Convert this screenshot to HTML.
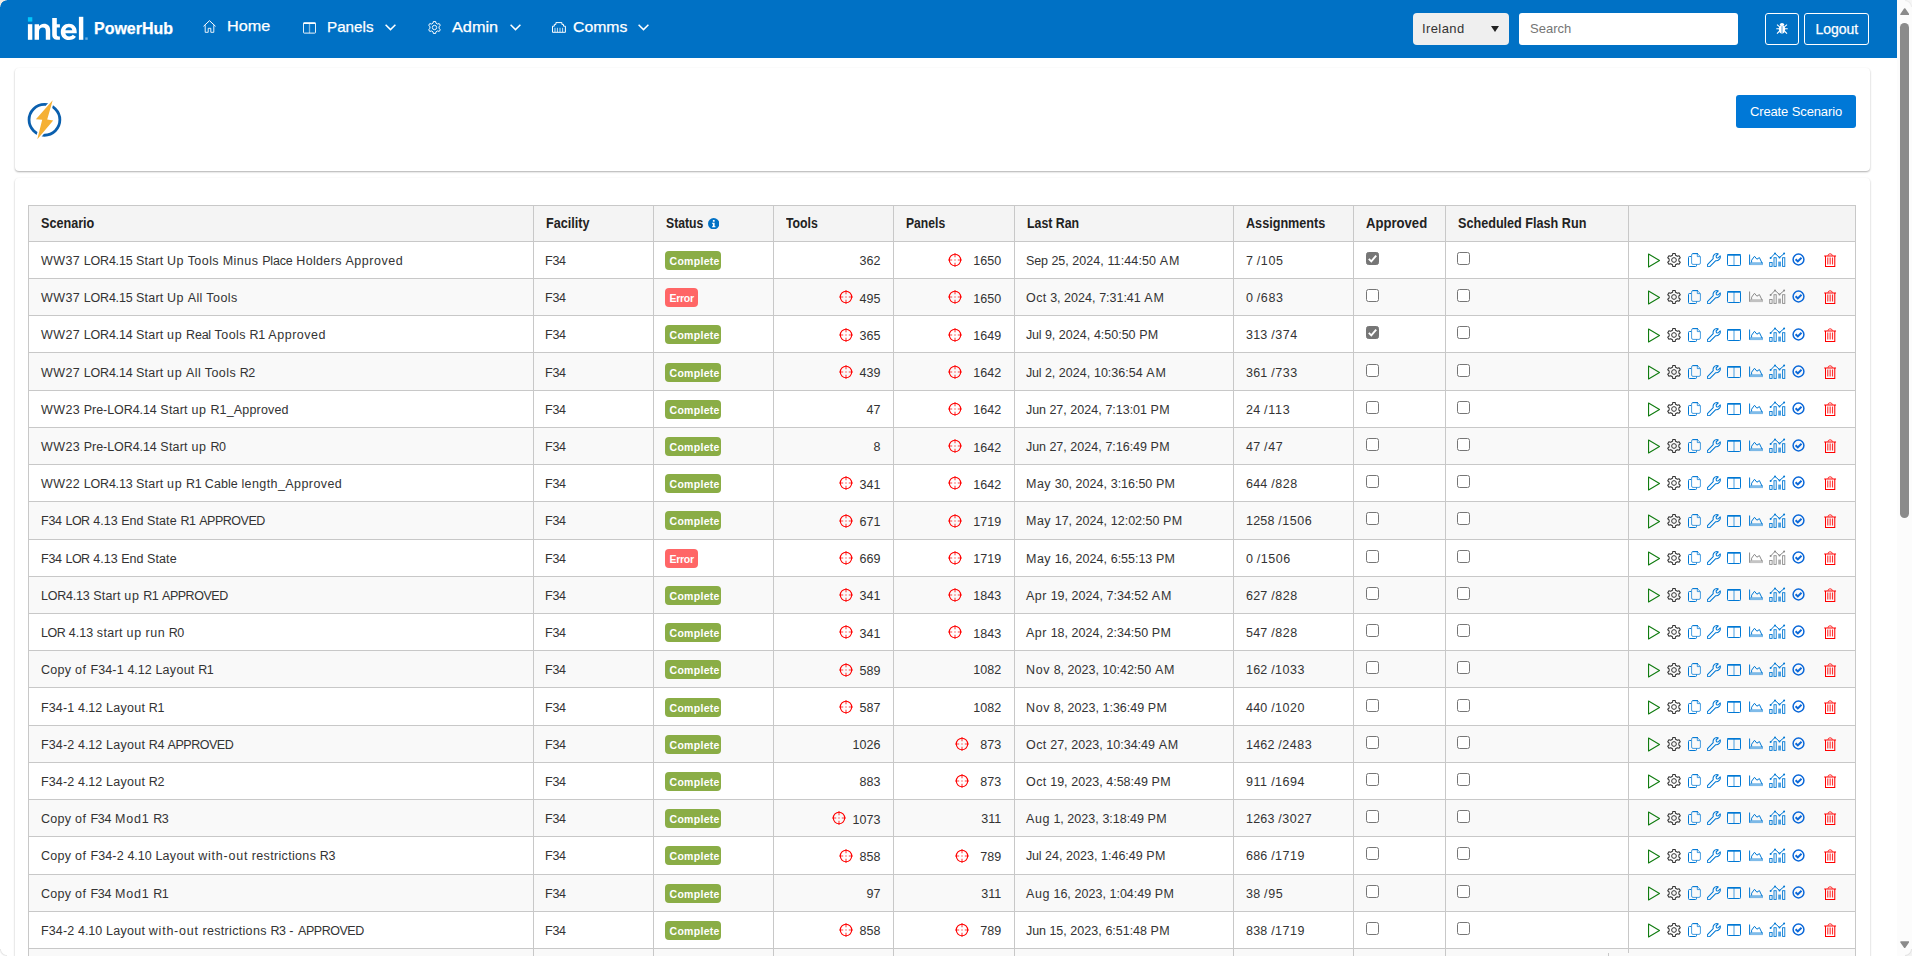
<!DOCTYPE html>
<html><head><meta charset="utf-8"><title>PowerHub</title>
<style>
*{box-sizing:border-box}
html,body{margin:0;padding:0;width:1912px;height:956px;overflow:hidden;background:#fff;font-family:"Liberation Sans",sans-serif;font-size:13px;color:#333}
#page{position:absolute;left:0;top:0;width:1897px;height:956px;overflow:hidden;background:#fff}
#nav{position:absolute;left:0;top:0;width:1897px;height:58px;background:#0071c5;color:#fff}
#nav .t{position:absolute;white-space:nowrap;color:#fff}
#nav .k{-webkit-text-stroke:0.25px #fff}
#nav svg{position:absolute;color:#fff;overflow:visible}
.card{position:absolute;left:15px;width:1855px;background:#fff;border-radius:4px;box-shadow:0 1px 2px rgba(0,0,0,.32)}
#btn{position:absolute;left:1736px;top:95px;width:120px;height:33px;background:#0078d7;border-radius:3px;color:#fff;font-size:13px;line-height:33px;text-align:center;letter-spacing:-0.12px}
table{position:absolute;left:28px;top:205px;width:1828px;border-collapse:collapse;table-layout:fixed}
th,td{border:1px solid #c8c8c8;padding:0 0 0 12px;text-align:left;vertical-align:middle;white-space:nowrap;overflow:hidden}
th{height:36px;background:#f4f4f4;font-weight:bold;color:#222;font-size:13.8px;padding-top:0}
th span{display:inline-block;transform-origin:0 50%;transform:scaleX(0.915);white-space:nowrap}
td{padding:0}
.tx{position:absolute;white-space:nowrap;font-size:12.5px;line-height:15px;color:#333;letter-spacing:0.22px}
.tx i{display:inline-block;font-style:normal;white-space:nowrap;overflow:visible}
.tx.nr{letter-spacing:0.05px;text-align:right}
.tx.dt{letter-spacing:0.12px}
tr:nth-child(even) td{background:#f9f9f9}
.badge{position:absolute;display:block;height:19px;line-height:21px;overflow:hidden;border-radius:4px;color:#fff;font-weight:bold;font-size:10.5px;letter-spacing:0;padding:0 0 0 4.5px;white-space:nowrap}
.badge.ok{background:#8aad46;width:56px;letter-spacing:0.3px}
.badge.err{background:#ff6666;width:33px;letter-spacing:-0.3px}
.cb{position:absolute;display:block;width:13px;height:13px;border:1px solid #767676;border-radius:2.5px;background:#fff}
.cb.on{background:#767676}
.cb svg{position:absolute;left:-1px;top:-1px;width:13px;height:13px}
.tg{width:14px;height:14px;color:#f00;vertical-align:top;position:relative}
.ic{position:absolute;overflow:visible}
.play{color:#107c10}
.gear{color:#333}
.b{color:#0078d4}
.chk{color:#0b68d8}
.g{color:#8a8a8a}
.r{color:#f00}
#sb{position:absolute;left:1897px;top:0;width:15px;height:956px;background:#fcfcfc}
#sb .th{position:absolute;left:3.2px;top:23px;width:9px;height:495px;border-radius:4.5px;background:#8b8b8b}
#sb .up{position:absolute;left:3px;top:7.8px;width:0;height:0;border-left:4.6px solid transparent;border-right:4.6px solid transparent;border-bottom:7.2px solid #8b8b8b}
#sb .dn{position:absolute;left:3px;top:941px;width:0;height:0;border-left:4.6px solid transparent;border-right:4.6px solid transparent;border-top:7.2px solid #8b8b8b}
</style></head><body>

<svg width="0" height="0" style="position:absolute">
<defs>
<symbol id="i-play" viewBox="0 0 13 15"><path d="M0.55 1 L11.5 7.5 L0.55 14 Z" fill="none" stroke="currentColor" stroke-width="1.1" stroke-linejoin="round"/></symbol>
<symbol id="i-gear" viewBox="0 0 14 14"><path d="M8.50 2.23 L8.18 0.46 L5.82 0.46 L5.50 2.23 L3.62 3.32 L1.92 2.71 L0.74 4.75 L2.12 5.91 L2.12 8.09 L0.74 9.25 L1.92 11.29 L3.62 10.68 L5.50 11.77 L5.82 13.54 L8.18 13.54 L8.50 11.77 L10.38 10.68 L12.08 11.29 L13.26 9.25 L11.88 8.09 L11.88 5.91 L13.26 4.75 L12.08 2.71 L10.38 3.32Z" fill="none" stroke="currentColor" stroke-width="1.05" stroke-linejoin="round"/><circle cx="7" cy="7" r="2.35" fill="none" stroke="currentColor" stroke-width="1"/></symbol>
<symbol id="i-copy" viewBox="0 0 13 14"><path d="M3.2 3.5 H1.4 Q0.5 3.5 0.5 4.4 V12.6 Q0.5 13.5 1.4 13.5 H7.6 Q8.5 13.5 8.5 12.6 V11.5" fill="none" stroke="currentColor" stroke-width="1"/><path d="M5 0.6 H9.3 L12.4 3.6 V10 Q12.4 11.4 11 11.4 H5 Q3.6 11.4 3.6 10 V2 Q3.6 0.6 5 0.6 Z" fill="none" stroke="currentColor" stroke-width="0.9" opacity="0.8"/><path d="M9.3 0.8 V3.6 H12.2" fill="none" stroke="currentColor" stroke-width="0.9" opacity="0.8"/><path d="M4.6 0.6 H10" stroke="currentColor" stroke-width="1" fill="none"/></symbol>
<symbol id="i-wrench" viewBox="0 0 14 14"><path d="M0.7 11.3 L6.2 5.7 C5.6 3.0 7.3 0.7 10.0 0.6 C10.5 0.6 10.9 0.7 11.3 0.9 L9.1 3 L9.4 4.7 L11.1 5 L13.2 2.9 C13.9 5.5 11.6 8.2 8.5 7.8 L3 13.3 C2.3 14 1.3 14 0.7 13.3 C0.1 12.7 0.1 11.9 0.7 11.3 Z" fill="none" stroke="currentColor" stroke-width="1.05" stroke-linejoin="round"/></symbol>
<symbol id="i-cols" viewBox="0 0 14 12"><rect x="0.5" y="0.5" width="13" height="11" rx="0.8" fill="none" stroke="currentColor" stroke-width="1"/><rect x="0.5" y="0" width="13" height="1.7" fill="currentColor"/><rect x="6.3" y="1" width="1.4" height="10.5" fill="currentColor" opacity="0.5"/></symbol>
<symbol id="i-area" viewBox="0 0 14 12"><path d="M0.6 0.5 V10.8" stroke="currentColor" stroke-width="1" fill="none"/><path d="M2.6 8.5 V6.2 L5.5 2.3 L7.9 5.2 L10.4 3.6 L13.2 9.4" fill="none" stroke="currentColor" stroke-width="1" stroke-linejoin="round"/><rect x="1" y="8.2" width="13" height="2.9" fill="currentColor" opacity="0.5"/></symbol>
<symbol id="i-bars" viewBox="0 0 17 15"><rect x="0.7" y="10.5" width="2.4" height="3.9" fill="none" stroke="currentColor" stroke-width="0.9"/><rect x="5" y="5.7" width="2.2" height="8.7" fill="none" stroke="currentColor" stroke-width="0.9"/><rect x="9.2" y="9.6" width="2.8" height="4.9" fill="currentColor" opacity="0.7"/><rect x="13.6" y="5.7" width="2.2" height="8.7" fill="none" stroke="currentColor" stroke-width="0.9"/><path d="M1.6 6 L6 1.4 L10.5 5.5 L15.1 1.6" fill="none" stroke="currentColor" stroke-width="1"/><circle cx="1.6" cy="6" r="1" fill="currentColor"/><circle cx="6" cy="1.4" r="1" fill="currentColor"/><circle cx="10.5" cy="5.5" r="1" fill="currentColor"/><circle cx="15.1" cy="1.6" r="1" fill="currentColor"/></symbol>
<symbol id="i-done" viewBox="0 0 13 13"><circle cx="6.5" cy="6.5" r="5.4" fill="none" stroke="currentColor" stroke-width="1.5"/><path d="M3.6 6.2 L5.8 8.4 L9.5 4.7" fill="none" stroke="currentColor" stroke-width="2"/></symbol>
<symbol id="i-trash" viewBox="0 0 13 15"><path d="M0.2 3.1 H12.8" stroke="currentColor" stroke-width="1.1" fill="none"/><path d="M4.2 2.8 C4.2 0.3 8.8 0.3 8.8 2.8" stroke="currentColor" stroke-width="1" fill="none"/><path d="M1.6 3.3 V14.3 H11.4 V3.3" stroke="currentColor" stroke-width="1.1" fill="none"/><path d="M4 4.8 V12.2 M6.5 4.8 V12.2 M9 4.8 V12.2" stroke="currentColor" stroke-width="1.2" fill="none" opacity="0.8"/></symbol>
<symbol id="i-target" viewBox="0 0 14 14"><circle cx="7" cy="7" r="5.7" fill="none" stroke="currentColor" stroke-width="1.1"/><path d="M7 0 V4.2 M7 9.8 V14 M0 7 H4.2 M9.8 7 H14 M6.3 7 H7.7" stroke="currentColor" stroke-width="1.1" opacity="0.75" fill="none"/></symbol>
<symbol id="i-home" viewBox="0 0 13 13"><path d="M0.5 6.3 L6.5 0.7 L12.5 6.3" fill="none" stroke="currentColor" stroke-width="1" stroke-linejoin="round"/><path d="M2.2 5.2 V12.3 H5.2 V8.3 H7.8 V12.3 H10.8 V5.2" fill="none" stroke="currentColor" stroke-width="1" opacity="0.9"/></symbol>
<symbol id="i-chev" viewBox="0 0 11 7"><path d="M0.6 0.7 L5.5 5.6 L10.4 0.7" fill="none" stroke="currentColor" stroke-width="1.5"/></symbol>
<symbol id="i-comms" viewBox="0 0 14 11"><path d="M0.5 10.3 V4.2 H2.3 V2.4 H3.9 V0.6 H9.9 V2.4 H11.5 V4.2 H13.4 V10.3 Z" fill="none" stroke="currentColor" stroke-width="1" stroke-linejoin="round"/><path d="M3 5.8 V10 M5.4 5.8 V10 M8 5.8 V10 M10.6 5.8 V10" stroke="currentColor" stroke-width="0.9" fill="none" opacity="0.85"/></symbol>
<symbol id="i-bug" viewBox="0 0 12 12"><ellipse cx="6" cy="7.2" rx="3.1" ry="4.2" fill="currentColor"/><path d="M3.7 3.3 C3.7 0.3 8.3 0.3 8.3 3.3 Z" fill="currentColor"/><path d="M0.3 6.8 H11.7 M1 2.6 L3.6 4.8 M11 2.6 L8.4 4.8 M1 11.6 L3.6 9 M11 11.6 L8.4 9" stroke="currentColor" stroke-width="1.1" fill="none"/><path d="M6 4.2 V11" stroke="#0071c5" stroke-width="0.7"/></symbol>
<symbol id="i-info" viewBox="0 0 11 11"><circle cx="5.5" cy="5.5" r="5.5" fill="currentColor"/><rect x="4.7" y="1.9" width="1.7" height="1.7" fill="#fff"/><path d="M3.9 4.6 H6.4 V8 H7.2 V9 H3.9 V8 H4.7 V5.6 H3.9 Z" fill="#fff"/></symbol>
</defs></svg>

<div id="page">
<div id="nav">
  <svg style="left:28px;top:17px;width:61px;height:23px" viewBox="0 0 61 23">
    <rect x="-0.1" y="0.2" width="4.4" height="4.4" fill="#00c7fd"/>
    <rect x="-0.1" y="7.2" width="4.4" height="15.6" fill="#fff"/>
    <path d="M6.6 22.8 V7.2 H11 V9.2 C12.1 7.6 13.8 6.7 16 6.7 C19.8 6.7 22.2 9 22.2 13.2 V22.8 H17.8 V14 C17.8 11.6 16.8 10.5 14.8 10.5 C12.6 10.5 11 12 11 14.6 V22.8 Z" fill="#fff"/>
    <path d="M24.2 1 H28.8 V7.2 H31.9 V10.5 H28.8 V17.2 C28.8 18.8 29.5 19.4 31 19.4 H31.9 V22.8 H30.2 C26.3 22.8 24.2 21.1 24.2 17.4 Z" fill="#fff"/>
    <path transform="translate(40.75 0) scale(1.04 1) translate(-41.15 0)" d="M41.3 6.7 C45.8 6.7 48.8 10 48.8 14.9 V16.2 H37.9 C38.2 18.2 39.5 19.4 41.6 19.4 C43 19.4 44.2 18.8 45 17.7 L48.1 19.8 C46.7 21.9 44.3 23.1 41.4 23.1 C36.7 23.1 33.5 19.8 33.5 15 C33.5 10.2 36.8 6.7 41.3 6.7 Z M41.3 10.3 C39.6 10.3 38.3 11.4 37.9 13.2 H44.6 C44.3 11.4 43.1 10.3 41.3 10.3 Z" fill="#fff" fill-rule="evenodd"/>
    <rect x="50.9" y="-0.2" width="4.4" height="23" fill="#fff"/>
    <rect x="57.3" y="20.4" width="2.4" height="2.4" fill="#6aaee0"/>
  </svg>
  <span class="t k" style="left:94.3px;top:17.9px;font-size:17.3px;font-weight:bold;letter-spacing:0;line-height:20px;transform-origin:0 50%;transform:scaleX(0.925)" >PowerHub</span>

  <svg style="left:203px;top:20px;width:13px;height:13px"><use href="#i-home"/></svg>
  <span class="t k" style="left:226.8px;top:15.9px;font-size:15px;line-height:20px;transform-origin:0 50%;transform:scaleX(1.08)" >Home</span>

  <svg style="left:303px;top:22px;width:13px;height:12px"><use href="#i-cols"/></svg>
  <span class="t k" style="left:327px;top:17.4px;font-size:15px;line-height:20px;transform-origin:0 50%;transform:scaleX(1.014)" >Panels</span>
  <svg style="left:385px;top:24px;width:11px;height:7px"><use href="#i-chev"/></svg>

  <svg style="left:428px;top:21px;width:13px;height:13px"><use href="#i-gear"/></svg>
  <span class="t k" style="left:452.2px;top:17.4px;font-size:15px;line-height:20px;transform-origin:0 50%;transform:scaleX(1.086)" >Admin</span>
  <svg style="left:510px;top:24px;width:11px;height:7px"><use href="#i-chev"/></svg>

  <svg style="left:552px;top:22px;width:14px;height:11px"><use href="#i-comms"/></svg>
  <span class="t k" style="left:573px;top:17.4px;font-size:15px;line-height:20px;transform-origin:0 50%;transform:scaleX(1.053)" >Comms</span>
  <svg style="left:638px;top:24px;width:11px;height:7px"><use href="#i-chev"/></svg>

  <div style="position:absolute;left:1413px;top:13px;width:96px;height:32px;background:#efefef;border-radius:4px"></div>
  <span class="t" style="left:1422px;top:19px;font-size:13px;line-height:20px;color:#333;letter-spacing:0.4px">Ireland</span>
  <div style="position:absolute;left:1491px;top:26px;width:0;height:0;border-left:4.2px solid transparent;border-right:4.2px solid transparent;border-top:6px solid #222"></div>
  <div style="position:absolute;left:1519px;top:13px;width:219px;height:32px;background:#fff;border-radius:3px"></div>
  <span class="t" style="left:1530px;top:19px;font-size:13px;line-height:20px;color:#757575">Search</span>
  <div style="position:absolute;left:1765px;top:13px;width:34px;height:32px;border:1px solid #fff;border-radius:3px"></div>
  <svg style="left:1776px;top:22px;width:12px;height:12px"><use href="#i-bug"/></svg>
  <div style="position:absolute;left:1804px;top:13px;width:65px;height:32px;border:1px solid #fff;border-radius:3px"></div>
  <span class="t k" style="left:1815.5px;top:19px;font-size:14px;line-height:20px;letter-spacing:-0.05px" >Logout</span>
</div>

<div class="card" style="top:68px;height:103px"></div>
<svg style="position:absolute;left:20px;top:95px;width:50px;height:50px;overflow:visible" viewBox="20 95 50 50">
  <circle cx="44.45" cy="119.85" r="15.4" fill="none" stroke="#0a5fae" stroke-width="2.8"/>
  <path d="M52.7 100.2 L35.9 119.3 L42.2 119.8 L37.3 139.2 L53.2 120.4 L47.2 119.6 Z" fill="#fff" stroke="#fff" stroke-width="3.2" stroke-linejoin="miter"/>
  <path d="M52.7 100.2 L35.9 119.3 L42.2 119.8 L37.3 139.2 L53.2 120.4 L47.2 119.6 Z" fill="#f5b034"/>
</svg>
<div id="btn">Create Scenario</div>

<div class="card" style="top:178px;height:900px"></div>
<table>
<colgroup><col style="width:505px"><col style="width:120px"><col style="width:120px"><col style="width:120px"><col style="width:121px"><col style="width:219px"><col style="width:120px"><col style="width:92px"><col style="width:183px"><col style="width:227px"></colgroup>
<thead><tr><th><span>Scenario</span></th><th><span>Facility</span></th><th style="position:relative"><span style="transform:scaleX(0.885)">Status</span><svg style="position:absolute;left:54px;top:12px;width:11.4px;height:11.4px;color:#0071c5"><use href="#i-info"/></svg></th><th><span style="transform:scaleX(0.89)">Tools</span></th><th><span style="transform:scaleX(0.88)">Panels</span></th><th><span style="transform:scaleX(0.895)">Last Ran</span></th><th><span>Assignments</span></th><th><span style="transform:scaleX(0.95)">Approved</span></th><th><span>Scheduled Flash Run</span></th><th></th></tr></thead>
<tbody>
<tr style="height:37px"><td></td><td></td><td></td><td></td><td></td><td></td><td></td><td></td><td></td><td></td></tr>
<tr style="height:37px"><td></td><td></td><td></td><td></td><td></td><td></td><td></td><td></td><td></td><td></td></tr>
<tr style="height:37px"><td></td><td></td><td></td><td></td><td></td><td></td><td></td><td></td><td></td><td></td></tr>
<tr style="height:38px"><td></td><td></td><td></td><td></td><td></td><td></td><td></td><td></td><td></td><td></td></tr>
<tr style="height:37px"><td></td><td></td><td></td><td></td><td></td><td></td><td></td><td></td><td></td><td></td></tr>
<tr style="height:37px"><td></td><td></td><td></td><td></td><td></td><td></td><td></td><td></td><td></td><td></td></tr>
<tr style="height:37px"><td></td><td></td><td></td><td></td><td></td><td></td><td></td><td></td><td></td><td></td></tr>
<tr style="height:38px"><td></td><td></td><td></td><td></td><td></td><td></td><td></td><td></td><td></td><td></td></tr>
<tr style="height:37px"><td></td><td></td><td></td><td></td><td></td><td></td><td></td><td></td><td></td><td></td></tr>
<tr style="height:37px"><td></td><td></td><td></td><td></td><td></td><td></td><td></td><td></td><td></td><td></td></tr>
<tr style="height:37px"><td></td><td></td><td></td><td></td><td></td><td></td><td></td><td></td><td></td><td></td></tr>
<tr style="height:37px"><td></td><td></td><td></td><td></td><td></td><td></td><td></td><td></td><td></td><td></td></tr>
<tr style="height:38px"><td></td><td></td><td></td><td></td><td></td><td></td><td></td><td></td><td></td><td></td></tr>
<tr style="height:37px"><td></td><td></td><td></td><td></td><td></td><td></td><td></td><td></td><td></td><td></td></tr>
<tr style="height:37px"><td></td><td></td><td></td><td></td><td></td><td></td><td></td><td></td><td></td><td></td></tr>
<tr style="height:37px"><td></td><td></td><td></td><td></td><td></td><td></td><td></td><td></td><td></td><td></td></tr>
<tr style="height:38px"><td></td><td></td><td></td><td></td><td></td><td></td><td></td><td></td><td></td><td></td></tr>
<tr style="height:37px"><td></td><td></td><td></td><td></td><td></td><td></td><td></td><td></td><td></td><td></td></tr>
<tr style="height:37px"><td></td><td></td><td></td><td></td><td></td><td></td><td></td><td></td><td></td><td></td></tr>
<tr style="height:37px"><td></td><td></td><td></td><td></td><td></td><td></td><td></td><td></td><td></td><td></td></tr>
</tbody></table>
<span class="tx" style="left:41px;top:254px"><i style="width:42.80px;letter-spacing:0.414px">WW37</i><i style="width:52.22px;letter-spacing:-0.207px">LOR4.15</i><i style="width:31.09px;letter-spacing:0.210px">Start</i><i style="width:20.58px;letter-spacing:0.480px">Up</i><i style="width:35.02px;letter-spacing:0.441px">Tools</i><i style="width:39.47px;letter-spacing:0.497px">Minus</i><i style="width:34.15px;letter-spacing:-0.152px">Place</i><i style="width:49.10px;letter-spacing:0.341px">Holders</i><i style="width:57.72px;letter-spacing:0.526px">Approved</i></span>
<span class="tx" style="left:545px;top:254px"><i style="width:20.81px;letter-spacing:-0.243px">F34</i></span>
<span class="badge ok" style="left:665px;top:251px">Complete</span>
<span class="tx nr" style="right:1016.4px;top:254px">362</span>
<span class="tx nr" style="right:895.8px;top:254px"><svg class="tg" style="margin-right:11px;top:-1px"><use href="#i-target"/></svg>1650</span>
<span class="tx" style="left:1026px;top:254px"><i style="width:25.46px;letter-spacing:-0.142px">Sep</i><i style="width:20.84px;letter-spacing:-0.057px">25,</i><i style="width:35.17px;letter-spacing:0.050px">2024,</i><i style="width:52.37px;letter-spacing:0.125px">11:44:50</i><i style="width:20.49px;letter-spacing:0.872px">AM</i></span>
<span class="tx" style="left:1246px;top:254px"><i style="width:10.80px;letter-spacing:0.210px">7</i><i style="width:26.66px;letter-spacing:0.584px">/105</i></span>
<span class="cb on" style="left:1366px;top:252px"><svg viewBox="0 0 13 13"><path d="M2.8 6.8 L5.3 9.3 L10.2 3.6" fill="none" stroke="#fff" stroke-width="1.9"/></svg></span>
<span class="cb" style="left:1457px;top:252px"></span>
<svg class="ic play" style="left:1648px;top:252.5px;width:13px;height:15px"><use href="#i-play"/></svg><svg class="ic gear" style="left:1667px;top:253px;width:14px;height:14px"><use href="#i-gear"/></svg><svg class="ic b" style="left:1688px;top:253px;width:13px;height:14px"><use href="#i-copy"/></svg><svg class="ic b" style="left:1707px;top:253px;width:14px;height:14px"><use href="#i-wrench"/></svg><svg class="ic b" style="left:1727px;top:254px;width:14px;height:12px"><use href="#i-cols"/></svg><svg class="ic b" style="left:1749px;top:253.8px;width:14px;height:12px"><use href="#i-area"/></svg><svg class="ic b" style="left:1768.5px;top:252px;width:17px;height:15px"><use href="#i-bars"/></svg><svg class="ic chk" style="left:1791.6px;top:253.2px;width:13px;height:13px"><use href="#i-done"/></svg><svg class="ic r" style="left:1824px;top:252.6px;width:12.3px;height:14.2px"><use href="#i-trash"/></svg>
<span class="tx" style="left:41px;top:291px"><i style="width:42.80px;letter-spacing:0.414px">WW37</i><i style="width:52.22px;letter-spacing:-0.207px">LOR4.15</i><i style="width:31.09px;letter-spacing:0.210px">Start</i><i style="width:20.58px;letter-spacing:0.480px">Up</i><i style="width:18.64px;letter-spacing:0.371px">All</i><i style="width:31.39px;letter-spacing:0.441px">Tools</i></span>
<span class="tx" style="left:545px;top:291px"><i style="width:20.81px;letter-spacing:-0.243px">F34</i></span>
<span class="badge err" style="left:665px;top:288px">Error</span>
<span class="tx nr" style="right:1016.4px;top:292px"><svg class="tg" style="margin-right:7px;top:-2px"><use href="#i-target"/></svg>495</span>
<span class="tx nr" style="right:895.8px;top:292px"><svg class="tg" style="margin-right:11px;top:-2px"><use href="#i-target"/></svg>1650</span>
<span class="tx" style="left:1026px;top:291px"><i style="width:24.30px;letter-spacing:0.405px">Oct</i><i style="width:13.68px;letter-spacing:-0.191px">3,</i><i style="width:35.17px;letter-spacing:0.050px">2024,</i><i style="width:45.21px;letter-spacing:-0.019px">7:31:41</i><i style="width:20.49px;letter-spacing:0.872px">AM</i></span>
<span class="tx" style="left:1246px;top:291px"><i style="width:10.80px;letter-spacing:0.210px">0</i><i style="width:26.66px;letter-spacing:0.584px">/683</i></span>
<span class="cb" style="left:1366px;top:289px"></span>
<span class="cb" style="left:1457px;top:289px"></span>
<svg class="ic play" style="left:1648px;top:289.5px;width:13px;height:15px"><use href="#i-play"/></svg><svg class="ic gear" style="left:1667px;top:290px;width:14px;height:14px"><use href="#i-gear"/></svg><svg class="ic b" style="left:1688px;top:290px;width:13px;height:14px"><use href="#i-copy"/></svg><svg class="ic b" style="left:1707px;top:290px;width:14px;height:14px"><use href="#i-wrench"/></svg><svg class="ic b" style="left:1727px;top:291px;width:14px;height:12px"><use href="#i-cols"/></svg><svg class="ic g" style="left:1749px;top:290.8px;width:14px;height:12px"><use href="#i-area"/></svg><svg class="ic g" style="left:1768.5px;top:289px;width:17px;height:15px"><use href="#i-bars"/></svg><svg class="ic chk" style="left:1791.6px;top:290.2px;width:13px;height:13px"><use href="#i-done"/></svg><svg class="ic r" style="left:1824px;top:289.6px;width:12.3px;height:14.2px"><use href="#i-trash"/></svg>
<span class="tx" style="left:41px;top:328px"><i style="width:42.80px;letter-spacing:0.414px">WW27</i><i style="width:52.22px;letter-spacing:-0.207px">LOR4.14</i><i style="width:31.09px;letter-spacing:0.210px">Start</i><i style="width:18.98px;letter-spacing:0.716px">up</i><i style="width:28.52px;letter-spacing:-0.207px">Real</i><i style="width:35.02px;letter-spacing:0.441px">Tools</i><i style="width:18.75px;letter-spacing:-0.435px">R1</i><i style="width:57.72px;letter-spacing:0.526px">Approved</i></span>
<span class="tx" style="left:545px;top:328px"><i style="width:20.81px;letter-spacing:-0.243px">F34</i></span>
<span class="badge ok" style="left:665px;top:325px">Complete</span>
<span class="tx nr" style="right:1016.4px;top:329px"><svg class="tg" style="margin-right:7px;top:-1px"><use href="#i-target"/></svg>365</span>
<span class="tx nr" style="right:895.8px;top:329px"><svg class="tg" style="margin-right:11px;top:-1px"><use href="#i-target"/></svg>1649</span>
<span class="tx" style="left:1026px;top:328px"><i style="width:19.12px;letter-spacing:-0.167px">Jul</i><i style="width:13.68px;letter-spacing:-0.191px">9,</i><i style="width:35.17px;letter-spacing:0.050px">2024,</i><i style="width:45.21px;letter-spacing:-0.019px">4:50:50</i><i style="width:19.36px;letter-spacing:0.307px">PM</i></span>
<span class="tx" style="left:1246px;top:328px"><i style="width:25.13px;letter-spacing:0.210px">313</i><i style="width:26.66px;letter-spacing:0.584px">/374</i></span>
<span class="cb on" style="left:1366px;top:326px"><svg viewBox="0 0 13 13"><path d="M2.8 6.8 L5.3 9.3 L10.2 3.6" fill="none" stroke="#fff" stroke-width="1.9"/></svg></span>
<span class="cb" style="left:1457px;top:326px"></span>
<svg class="ic play" style="left:1648px;top:327.5px;width:13px;height:15px"><use href="#i-play"/></svg><svg class="ic gear" style="left:1667px;top:328px;width:14px;height:14px"><use href="#i-gear"/></svg><svg class="ic b" style="left:1688px;top:328px;width:13px;height:14px"><use href="#i-copy"/></svg><svg class="ic b" style="left:1707px;top:328px;width:14px;height:14px"><use href="#i-wrench"/></svg><svg class="ic b" style="left:1727px;top:329px;width:14px;height:12px"><use href="#i-cols"/></svg><svg class="ic b" style="left:1749px;top:328.8px;width:14px;height:12px"><use href="#i-area"/></svg><svg class="ic b" style="left:1768.5px;top:327px;width:17px;height:15px"><use href="#i-bars"/></svg><svg class="ic chk" style="left:1791.6px;top:328.2px;width:13px;height:13px"><use href="#i-done"/></svg><svg class="ic r" style="left:1824px;top:327.6px;width:12.3px;height:14.2px"><use href="#i-trash"/></svg>
<span class="tx" style="left:41px;top:366px"><i style="width:42.80px;letter-spacing:0.414px">WW27</i><i style="width:52.22px;letter-spacing:-0.207px">LOR4.14</i><i style="width:31.09px;letter-spacing:0.210px">Start</i><i style="width:18.98px;letter-spacing:0.716px">up</i><i style="width:18.64px;letter-spacing:0.371px">All</i><i style="width:35.02px;letter-spacing:0.441px">Tools</i><i style="width:15.11px;letter-spacing:-0.435px">R2</i></span>
<span class="tx" style="left:545px;top:366px"><i style="width:20.81px;letter-spacing:-0.243px">F34</i></span>
<span class="badge ok" style="left:665px;top:363px">Complete</span>
<span class="tx nr" style="right:1016.4px;top:366px"><svg class="tg" style="margin-right:7px;top:-1px"><use href="#i-target"/></svg>439</span>
<span class="tx nr" style="right:895.8px;top:366px"><svg class="tg" style="margin-right:11px;top:-1px"><use href="#i-target"/></svg>1642</span>
<span class="tx" style="left:1026px;top:366px"><i style="width:19.12px;letter-spacing:-0.167px">Jul</i><i style="width:13.68px;letter-spacing:-0.191px">2,</i><i style="width:35.17px;letter-spacing:0.050px">2024,</i><i style="width:52.37px;letter-spacing:0.009px">10:36:54</i><i style="width:20.49px;letter-spacing:0.872px">AM</i></span>
<span class="tx" style="left:1246px;top:366px"><i style="width:25.13px;letter-spacing:0.210px">361</i><i style="width:26.66px;letter-spacing:0.584px">/733</i></span>
<span class="cb" style="left:1366px;top:364px"></span>
<span class="cb" style="left:1457px;top:364px"></span>
<svg class="ic play" style="left:1648px;top:364.5px;width:13px;height:15px"><use href="#i-play"/></svg><svg class="ic gear" style="left:1667px;top:365px;width:14px;height:14px"><use href="#i-gear"/></svg><svg class="ic b" style="left:1688px;top:365px;width:13px;height:14px"><use href="#i-copy"/></svg><svg class="ic b" style="left:1707px;top:365px;width:14px;height:14px"><use href="#i-wrench"/></svg><svg class="ic b" style="left:1727px;top:366px;width:14px;height:12px"><use href="#i-cols"/></svg><svg class="ic b" style="left:1749px;top:365.8px;width:14px;height:12px"><use href="#i-area"/></svg><svg class="ic b" style="left:1768.5px;top:364px;width:17px;height:15px"><use href="#i-bars"/></svg><svg class="ic chk" style="left:1791.6px;top:365.2px;width:13px;height:13px"><use href="#i-done"/></svg><svg class="ic r" style="left:1824px;top:364.6px;width:12.3px;height:14.2px"><use href="#i-trash"/></svg>
<span class="tx" style="left:41px;top:403px"><i style="width:42.80px;letter-spacing:0.414px">WW23</i><i style="width:76.55px;letter-spacing:-0.067px">Pre-LOR4.14</i><i style="width:31.09px;letter-spacing:0.210px">Start</i><i style="width:18.98px;letter-spacing:0.716px">up</i><i style="width:78.34px;letter-spacing:0.173px">R1_Approved</i></span>
<span class="tx" style="left:545px;top:403px"><i style="width:20.81px;letter-spacing:-0.243px">F34</i></span>
<span class="badge ok" style="left:665px;top:400px">Complete</span>
<span class="tx nr" style="right:1016.4px;top:403px">47</span>
<span class="tx nr" style="right:895.8px;top:403px"><svg class="tg" style="margin-right:11px;top:-1px"><use href="#i-target"/></svg>1642</span>
<span class="tx" style="left:1026px;top:403px"><i style="width:23.43px;letter-spacing:-0.123px">Jun</i><i style="width:20.84px;letter-spacing:-0.057px">27,</i><i style="width:35.17px;letter-spacing:0.050px">2024,</i><i style="width:45.21px;letter-spacing:-0.019px">7:13:01</i><i style="width:19.36px;letter-spacing:0.307px">PM</i></span>
<span class="tx" style="left:1246px;top:403px"><i style="width:17.96px;letter-spacing:0.210px">24</i><i style="width:26.66px;letter-spacing:0.815px">/113</i></span>
<span class="cb" style="left:1366px;top:401px"></span>
<span class="cb" style="left:1457px;top:401px"></span>
<svg class="ic play" style="left:1648px;top:401.5px;width:13px;height:15px"><use href="#i-play"/></svg><svg class="ic gear" style="left:1667px;top:402px;width:14px;height:14px"><use href="#i-gear"/></svg><svg class="ic b" style="left:1688px;top:402px;width:13px;height:14px"><use href="#i-copy"/></svg><svg class="ic b" style="left:1707px;top:402px;width:14px;height:14px"><use href="#i-wrench"/></svg><svg class="ic b" style="left:1727px;top:403px;width:14px;height:12px"><use href="#i-cols"/></svg><svg class="ic b" style="left:1749px;top:402.8px;width:14px;height:12px"><use href="#i-area"/></svg><svg class="ic b" style="left:1768.5px;top:401px;width:17px;height:15px"><use href="#i-bars"/></svg><svg class="ic chk" style="left:1791.6px;top:402.2px;width:13px;height:13px"><use href="#i-done"/></svg><svg class="ic r" style="left:1824px;top:401.6px;width:12.3px;height:14.2px"><use href="#i-trash"/></svg>
<span class="tx" style="left:41px;top:440px"><i style="width:42.80px;letter-spacing:0.414px">WW23</i><i style="width:76.55px;letter-spacing:-0.067px">Pre-LOR4.14</i><i style="width:31.09px;letter-spacing:0.210px">Start</i><i style="width:18.98px;letter-spacing:0.716px">up</i><i style="width:15.11px;letter-spacing:-0.435px">R0</i></span>
<span class="tx" style="left:545px;top:440px"><i style="width:20.81px;letter-spacing:-0.243px">F34</i></span>
<span class="badge ok" style="left:665px;top:437px">Complete</span>
<span class="tx nr" style="right:1016.4px;top:440px">8</span>
<span class="tx nr" style="right:895.8px;top:441px"><svg class="tg" style="margin-right:11px;top:-2px"><use href="#i-target"/></svg>1642</span>
<span class="tx" style="left:1026px;top:440px"><i style="width:23.43px;letter-spacing:-0.123px">Jun</i><i style="width:20.84px;letter-spacing:-0.057px">27,</i><i style="width:35.17px;letter-spacing:0.050px">2024,</i><i style="width:45.21px;letter-spacing:-0.019px">7:16:49</i><i style="width:19.36px;letter-spacing:0.307px">PM</i></span>
<span class="tx" style="left:1246px;top:440px"><i style="width:17.96px;letter-spacing:0.210px">47</i><i style="width:19.50px;letter-spacing:0.708px">/47</i></span>
<span class="cb" style="left:1366px;top:438px"></span>
<span class="cb" style="left:1457px;top:438px"></span>
<svg class="ic play" style="left:1648px;top:438.5px;width:13px;height:15px"><use href="#i-play"/></svg><svg class="ic gear" style="left:1667px;top:439px;width:14px;height:14px"><use href="#i-gear"/></svg><svg class="ic b" style="left:1688px;top:439px;width:13px;height:14px"><use href="#i-copy"/></svg><svg class="ic b" style="left:1707px;top:439px;width:14px;height:14px"><use href="#i-wrench"/></svg><svg class="ic b" style="left:1727px;top:440px;width:14px;height:12px"><use href="#i-cols"/></svg><svg class="ic b" style="left:1749px;top:439.8px;width:14px;height:12px"><use href="#i-area"/></svg><svg class="ic b" style="left:1768.5px;top:438px;width:17px;height:15px"><use href="#i-bars"/></svg><svg class="ic chk" style="left:1791.6px;top:439.2px;width:13px;height:13px"><use href="#i-done"/></svg><svg class="ic r" style="left:1824px;top:438.6px;width:12.3px;height:14.2px"><use href="#i-trash"/></svg>
<span class="tx" style="left:41px;top:477px"><i style="width:42.80px;letter-spacing:0.414px">WW22</i><i style="width:52.22px;letter-spacing:-0.207px">LOR4.13</i><i style="width:31.09px;letter-spacing:0.210px">Start</i><i style="width:18.98px;letter-spacing:0.716px">up</i><i style="width:18.75px;letter-spacing:-0.435px">R1</i><i style="width:36.61px;letter-spacing:0.062px">Cable</i><i style="width:100.77px;letter-spacing:0.417px">length_Approved</i></span>
<span class="tx" style="left:545px;top:477px"><i style="width:20.81px;letter-spacing:-0.243px">F34</i></span>
<span class="badge ok" style="left:665px;top:474px">Complete</span>
<span class="tx nr" style="right:1016.4px;top:478px"><svg class="tg" style="margin-right:7px;top:-2px"><use href="#i-target"/></svg>341</span>
<span class="tx nr" style="right:895.8px;top:478px"><svg class="tg" style="margin-right:11px;top:-2px"><use href="#i-target"/></svg>1642</span>
<span class="tx" style="left:1026px;top:477px"><i style="width:28.75px;letter-spacing:0.497px">May</i><i style="width:20.84px;letter-spacing:-0.057px">30,</i><i style="width:35.17px;letter-spacing:0.050px">2024,</i><i style="width:45.21px;letter-spacing:-0.019px">3:16:50</i><i style="width:19.36px;letter-spacing:0.307px">PM</i></span>
<span class="tx" style="left:1246px;top:477px"><i style="width:25.13px;letter-spacing:0.210px">644</i><i style="width:26.66px;letter-spacing:0.584px">/828</i></span>
<span class="cb" style="left:1366px;top:475px"></span>
<span class="cb" style="left:1457px;top:475px"></span>
<svg class="ic play" style="left:1648px;top:475.5px;width:13px;height:15px"><use href="#i-play"/></svg><svg class="ic gear" style="left:1667px;top:476px;width:14px;height:14px"><use href="#i-gear"/></svg><svg class="ic b" style="left:1688px;top:476px;width:13px;height:14px"><use href="#i-copy"/></svg><svg class="ic b" style="left:1707px;top:476px;width:14px;height:14px"><use href="#i-wrench"/></svg><svg class="ic b" style="left:1727px;top:477px;width:14px;height:12px"><use href="#i-cols"/></svg><svg class="ic b" style="left:1749px;top:476.8px;width:14px;height:12px"><use href="#i-area"/></svg><svg class="ic b" style="left:1768.5px;top:475px;width:17px;height:15px"><use href="#i-bars"/></svg><svg class="ic chk" style="left:1791.6px;top:476.2px;width:13px;height:13px"><use href="#i-done"/></svg><svg class="ic r" style="left:1824px;top:475.6px;width:12.3px;height:14.2px"><use href="#i-trash"/></svg>
<span class="tx" style="left:41px;top:514px"><i style="width:24.45px;letter-spacing:-0.243px">F34</i><i style="width:27.86px;letter-spacing:-0.495px">LOR</i><i style="width:28.01px;letter-spacing:0.009px">4.13</i><i style="width:25.70px;letter-spacing:-0.062px">End</i><i style="width:33.42px;letter-spacing:0.119px">State</i><i style="width:18.75px;letter-spacing:-0.435px">R1</i><i style="width:65.71px;letter-spacing:-0.469px">APPROVED</i></span>
<span class="tx" style="left:545px;top:514px"><i style="width:20.81px;letter-spacing:-0.243px">F34</i></span>
<span class="badge ok" style="left:665px;top:511px">Complete</span>
<span class="tx nr" style="right:1016.4px;top:515px"><svg class="tg" style="margin-right:7px;top:-1px"><use href="#i-target"/></svg>671</span>
<span class="tx nr" style="right:895.8px;top:515px"><svg class="tg" style="margin-right:11px;top:-1px"><use href="#i-target"/></svg>1719</span>
<span class="tx" style="left:1026px;top:514px"><i style="width:28.75px;letter-spacing:0.497px">May</i><i style="width:20.84px;letter-spacing:-0.057px">17,</i><i style="width:35.17px;letter-spacing:0.050px">2024,</i><i style="width:52.37px;letter-spacing:0.009px">12:02:50</i><i style="width:19.36px;letter-spacing:0.307px">PM</i></span>
<span class="tx" style="left:1246px;top:514px"><i style="width:32.29px;letter-spacing:0.210px">1258</i><i style="width:33.82px;letter-spacing:0.509px">/1506</i></span>
<span class="cb" style="left:1366px;top:512px"></span>
<span class="cb" style="left:1457px;top:512px"></span>
<svg class="ic play" style="left:1648px;top:513.5px;width:13px;height:15px"><use href="#i-play"/></svg><svg class="ic gear" style="left:1667px;top:514px;width:14px;height:14px"><use href="#i-gear"/></svg><svg class="ic b" style="left:1688px;top:514px;width:13px;height:14px"><use href="#i-copy"/></svg><svg class="ic b" style="left:1707px;top:514px;width:14px;height:14px"><use href="#i-wrench"/></svg><svg class="ic b" style="left:1727px;top:515px;width:14px;height:12px"><use href="#i-cols"/></svg><svg class="ic b" style="left:1749px;top:514.8px;width:14px;height:12px"><use href="#i-area"/></svg><svg class="ic b" style="left:1768.5px;top:513px;width:17px;height:15px"><use href="#i-bars"/></svg><svg class="ic chk" style="left:1791.6px;top:514.2px;width:13px;height:13px"><use href="#i-done"/></svg><svg class="ic r" style="left:1824px;top:513.6px;width:12.3px;height:14.2px"><use href="#i-trash"/></svg>
<span class="tx" style="left:41px;top:552px"><i style="width:24.45px;letter-spacing:-0.243px">F34</i><i style="width:27.86px;letter-spacing:-0.495px">LOR</i><i style="width:28.01px;letter-spacing:0.009px">4.13</i><i style="width:25.70px;letter-spacing:-0.062px">End</i><i style="width:29.78px;letter-spacing:0.119px">State</i></span>
<span class="tx" style="left:545px;top:552px"><i style="width:20.81px;letter-spacing:-0.243px">F34</i></span>
<span class="badge err" style="left:665px;top:549px">Error</span>
<span class="tx nr" style="right:1016.4px;top:552px"><svg class="tg" style="margin-right:7px;top:-1px"><use href="#i-target"/></svg>669</span>
<span class="tx nr" style="right:895.8px;top:552px"><svg class="tg" style="margin-right:11px;top:-1px"><use href="#i-target"/></svg>1719</span>
<span class="tx" style="left:1026px;top:552px"><i style="width:28.75px;letter-spacing:0.497px">May</i><i style="width:20.84px;letter-spacing:-0.057px">16,</i><i style="width:35.17px;letter-spacing:0.050px">2024,</i><i style="width:45.21px;letter-spacing:-0.019px">6:55:13</i><i style="width:19.36px;letter-spacing:0.307px">PM</i></span>
<span class="tx" style="left:1246px;top:552px"><i style="width:10.80px;letter-spacing:0.210px">0</i><i style="width:33.82px;letter-spacing:0.509px">/1506</i></span>
<span class="cb" style="left:1366px;top:550px"></span>
<span class="cb" style="left:1457px;top:550px"></span>
<svg class="ic play" style="left:1648px;top:550.5px;width:13px;height:15px"><use href="#i-play"/></svg><svg class="ic gear" style="left:1667px;top:551px;width:14px;height:14px"><use href="#i-gear"/></svg><svg class="ic b" style="left:1688px;top:551px;width:13px;height:14px"><use href="#i-copy"/></svg><svg class="ic b" style="left:1707px;top:551px;width:14px;height:14px"><use href="#i-wrench"/></svg><svg class="ic b" style="left:1727px;top:552px;width:14px;height:12px"><use href="#i-cols"/></svg><svg class="ic g" style="left:1749px;top:551.8px;width:14px;height:12px"><use href="#i-area"/></svg><svg class="ic g" style="left:1768.5px;top:550px;width:17px;height:15px"><use href="#i-bars"/></svg><svg class="ic chk" style="left:1791.6px;top:551.2px;width:13px;height:13px"><use href="#i-done"/></svg><svg class="ic r" style="left:1824px;top:550.6px;width:12.3px;height:14.2px"><use href="#i-trash"/></svg>
<span class="tx" style="left:41px;top:589px"><i style="width:52.22px;letter-spacing:-0.207px">LOR4.13</i><i style="width:31.09px;letter-spacing:0.210px">Start</i><i style="width:18.98px;letter-spacing:0.716px">up</i><i style="width:18.75px;letter-spacing:-0.435px">R1</i><i style="width:65.71px;letter-spacing:-0.469px">APPROVED</i></span>
<span class="tx" style="left:545px;top:589px"><i style="width:20.81px;letter-spacing:-0.243px">F34</i></span>
<span class="badge ok" style="left:665px;top:586px">Complete</span>
<span class="tx nr" style="right:1016.4px;top:589px"><svg class="tg" style="margin-right:7px;top:-1px"><use href="#i-target"/></svg>341</span>
<span class="tx nr" style="right:895.8px;top:589px"><svg class="tg" style="margin-right:11px;top:-1px"><use href="#i-target"/></svg>1843</span>
<span class="tx" style="left:1026px;top:589px"><i style="width:24.64px;letter-spacing:0.516px">Apr</i><i style="width:20.84px;letter-spacing:-0.057px">19,</i><i style="width:35.17px;letter-spacing:0.050px">2024,</i><i style="width:45.21px;letter-spacing:-0.019px">7:34:52</i><i style="width:20.49px;letter-spacing:0.872px">AM</i></span>
<span class="tx" style="left:1246px;top:589px"><i style="width:25.13px;letter-spacing:0.210px">627</i><i style="width:26.66px;letter-spacing:0.584px">/828</i></span>
<span class="cb" style="left:1366px;top:587px"></span>
<span class="cb" style="left:1457px;top:587px"></span>
<svg class="ic play" style="left:1648px;top:587.5px;width:13px;height:15px"><use href="#i-play"/></svg><svg class="ic gear" style="left:1667px;top:588px;width:14px;height:14px"><use href="#i-gear"/></svg><svg class="ic b" style="left:1688px;top:588px;width:13px;height:14px"><use href="#i-copy"/></svg><svg class="ic b" style="left:1707px;top:588px;width:14px;height:14px"><use href="#i-wrench"/></svg><svg class="ic b" style="left:1727px;top:589px;width:14px;height:12px"><use href="#i-cols"/></svg><svg class="ic b" style="left:1749px;top:588.8px;width:14px;height:12px"><use href="#i-area"/></svg><svg class="ic b" style="left:1768.5px;top:587px;width:17px;height:15px"><use href="#i-bars"/></svg><svg class="ic chk" style="left:1791.6px;top:588.2px;width:13px;height:13px"><use href="#i-done"/></svg><svg class="ic r" style="left:1824px;top:587.6px;width:12.3px;height:14.2px"><use href="#i-trash"/></svg>
<span class="tx" style="left:41px;top:626px"><i style="width:27.86px;letter-spacing:-0.495px">LOR</i><i style="width:28.01px;letter-spacing:0.009px">4.13</i><i style="width:29.67px;letter-spacing:0.345px">start</i><i style="width:18.98px;letter-spacing:0.716px">up</i><i style="width:23.31px;letter-spacing:0.534px">run</i><i style="width:15.11px;letter-spacing:-0.435px">R0</i></span>
<span class="tx" style="left:545px;top:626px"><i style="width:20.81px;letter-spacing:-0.243px">F34</i></span>
<span class="badge ok" style="left:665px;top:623px">Complete</span>
<span class="tx nr" style="right:1016.4px;top:627px"><svg class="tg" style="margin-right:7px;top:-2px"><use href="#i-target"/></svg>341</span>
<span class="tx nr" style="right:895.8px;top:627px"><svg class="tg" style="margin-right:11px;top:-2px"><use href="#i-target"/></svg>1843</span>
<span class="tx" style="left:1026px;top:626px"><i style="width:24.64px;letter-spacing:0.516px">Apr</i><i style="width:20.84px;letter-spacing:-0.057px">18,</i><i style="width:35.17px;letter-spacing:0.050px">2024,</i><i style="width:45.21px;letter-spacing:-0.019px">2:34:50</i><i style="width:19.36px;letter-spacing:0.307px">PM</i></span>
<span class="tx" style="left:1246px;top:626px"><i style="width:25.13px;letter-spacing:0.210px">547</i><i style="width:26.66px;letter-spacing:0.584px">/828</i></span>
<span class="cb" style="left:1366px;top:624px"></span>
<span class="cb" style="left:1457px;top:624px"></span>
<svg class="ic play" style="left:1648px;top:624.5px;width:13px;height:15px"><use href="#i-play"/></svg><svg class="ic gear" style="left:1667px;top:625px;width:14px;height:14px"><use href="#i-gear"/></svg><svg class="ic b" style="left:1688px;top:625px;width:13px;height:14px"><use href="#i-copy"/></svg><svg class="ic b" style="left:1707px;top:625px;width:14px;height:14px"><use href="#i-wrench"/></svg><svg class="ic b" style="left:1727px;top:626px;width:14px;height:12px"><use href="#i-cols"/></svg><svg class="ic b" style="left:1749px;top:625.8px;width:14px;height:12px"><use href="#i-area"/></svg><svg class="ic b" style="left:1768.5px;top:624px;width:17px;height:15px"><use href="#i-bars"/></svg><svg class="ic chk" style="left:1791.6px;top:625.2px;width:13px;height:13px"><use href="#i-done"/></svg><svg class="ic r" style="left:1824px;top:624.6px;width:12.3px;height:14.2px"><use href="#i-trash"/></svg>
<span class="tx" style="left:41px;top:663px"><i style="width:33.88px;letter-spacing:0.266px">Copy</i><i style="width:15.58px;letter-spacing:0.759px">of</i><i style="width:36.93px;letter-spacing:0.126px">F34-1</i><i style="width:28.01px;letter-spacing:0.009px">4.12</i><i style="width:42.89px;letter-spacing:0.287px">Layout</i><i style="width:15.11px;letter-spacing:-0.435px">R1</i></span>
<span class="tx" style="left:545px;top:663px"><i style="width:20.81px;letter-spacing:-0.243px">F34</i></span>
<span class="badge ok" style="left:665px;top:660px">Complete</span>
<span class="tx nr" style="right:1016.4px;top:664px"><svg class="tg" style="margin-right:7px;top:-1px"><use href="#i-target"/></svg>589</span>
<span class="tx nr" style="right:895.8px;top:663px">1082</span>
<span class="tx" style="left:1026px;top:663px"><i style="width:27.72px;letter-spacing:0.617px">Nov</i><i style="width:13.68px;letter-spacing:-0.191px">8,</i><i style="width:35.17px;letter-spacing:0.050px">2023,</i><i style="width:52.37px;letter-spacing:0.009px">10:42:50</i><i style="width:20.49px;letter-spacing:0.872px">AM</i></span>
<span class="tx" style="left:1246px;top:663px"><i style="width:25.13px;letter-spacing:0.210px">162</i><i style="width:33.82px;letter-spacing:0.509px">/1033</i></span>
<span class="cb" style="left:1366px;top:661px"></span>
<span class="cb" style="left:1457px;top:661px"></span>
<svg class="ic play" style="left:1648px;top:662.5px;width:13px;height:15px"><use href="#i-play"/></svg><svg class="ic gear" style="left:1667px;top:663px;width:14px;height:14px"><use href="#i-gear"/></svg><svg class="ic b" style="left:1688px;top:663px;width:13px;height:14px"><use href="#i-copy"/></svg><svg class="ic b" style="left:1707px;top:663px;width:14px;height:14px"><use href="#i-wrench"/></svg><svg class="ic b" style="left:1727px;top:664px;width:14px;height:12px"><use href="#i-cols"/></svg><svg class="ic b" style="left:1749px;top:663.8px;width:14px;height:12px"><use href="#i-area"/></svg><svg class="ic b" style="left:1768.5px;top:662px;width:17px;height:15px"><use href="#i-bars"/></svg><svg class="ic chk" style="left:1791.6px;top:663.2px;width:13px;height:13px"><use href="#i-done"/></svg><svg class="ic r" style="left:1824px;top:662.6px;width:12.3px;height:14.2px"><use href="#i-trash"/></svg>
<span class="tx" style="left:41px;top:701px"><i style="width:36.93px;letter-spacing:0.126px">F34-1</i><i style="width:28.01px;letter-spacing:0.009px">4.12</i><i style="width:42.89px;letter-spacing:0.287px">Layout</i><i style="width:15.11px;letter-spacing:-0.435px">R1</i></span>
<span class="tx" style="left:545px;top:701px"><i style="width:20.81px;letter-spacing:-0.243px">F34</i></span>
<span class="badge ok" style="left:665px;top:698px">Complete</span>
<span class="tx nr" style="right:1016.4px;top:701px"><svg class="tg" style="margin-right:7px;top:-1px"><use href="#i-target"/></svg>587</span>
<span class="tx nr" style="right:895.8px;top:701px">1082</span>
<span class="tx" style="left:1026px;top:701px"><i style="width:27.72px;letter-spacing:0.617px">Nov</i><i style="width:13.68px;letter-spacing:-0.191px">8,</i><i style="width:35.17px;letter-spacing:0.050px">2023,</i><i style="width:45.21px;letter-spacing:-0.019px">1:36:49</i><i style="width:19.36px;letter-spacing:0.307px">PM</i></span>
<span class="tx" style="left:1246px;top:701px"><i style="width:25.13px;letter-spacing:0.210px">440</i><i style="width:33.82px;letter-spacing:0.509px">/1020</i></span>
<span class="cb" style="left:1366px;top:699px"></span>
<span class="cb" style="left:1457px;top:699px"></span>
<svg class="ic play" style="left:1648px;top:699.5px;width:13px;height:15px"><use href="#i-play"/></svg><svg class="ic gear" style="left:1667px;top:700px;width:14px;height:14px"><use href="#i-gear"/></svg><svg class="ic b" style="left:1688px;top:700px;width:13px;height:14px"><use href="#i-copy"/></svg><svg class="ic b" style="left:1707px;top:700px;width:14px;height:14px"><use href="#i-wrench"/></svg><svg class="ic b" style="left:1727px;top:701px;width:14px;height:12px"><use href="#i-cols"/></svg><svg class="ic b" style="left:1749px;top:700.8px;width:14px;height:12px"><use href="#i-area"/></svg><svg class="ic b" style="left:1768.5px;top:699px;width:17px;height:15px"><use href="#i-bars"/></svg><svg class="ic chk" style="left:1791.6px;top:700.2px;width:13px;height:13px"><use href="#i-done"/></svg><svg class="ic r" style="left:1824px;top:699.6px;width:12.3px;height:14.2px"><use href="#i-trash"/></svg>
<span class="tx" style="left:41px;top:738px"><i style="width:36.93px;letter-spacing:0.126px">F34-2</i><i style="width:28.01px;letter-spacing:0.009px">4.12</i><i style="width:42.89px;letter-spacing:0.287px">Layout</i><i style="width:18.75px;letter-spacing:-0.435px">R4</i><i style="width:65.71px;letter-spacing:-0.469px">APPROVED</i></span>
<span class="tx" style="left:545px;top:738px"><i style="width:20.81px;letter-spacing:-0.243px">F34</i></span>
<span class="badge ok" style="left:665px;top:735px">Complete</span>
<span class="tx nr" style="right:1016.4px;top:738px">1026</span>
<span class="tx nr" style="right:895.8px;top:738px"><svg class="tg" style="margin-right:11px;top:-1px"><use href="#i-target"/></svg>873</span>
<span class="tx" style="left:1026px;top:738px"><i style="width:24.30px;letter-spacing:0.405px">Oct</i><i style="width:20.84px;letter-spacing:-0.057px">27,</i><i style="width:35.17px;letter-spacing:0.050px">2023,</i><i style="width:52.37px;letter-spacing:0.009px">10:34:49</i><i style="width:20.49px;letter-spacing:0.872px">AM</i></span>
<span class="tx" style="left:1246px;top:738px"><i style="width:32.29px;letter-spacing:0.210px">1462</i><i style="width:33.82px;letter-spacing:0.509px">/2483</i></span>
<span class="cb" style="left:1366px;top:736px"></span>
<span class="cb" style="left:1457px;top:736px"></span>
<svg class="ic play" style="left:1648px;top:736.5px;width:13px;height:15px"><use href="#i-play"/></svg><svg class="ic gear" style="left:1667px;top:737px;width:14px;height:14px"><use href="#i-gear"/></svg><svg class="ic b" style="left:1688px;top:737px;width:13px;height:14px"><use href="#i-copy"/></svg><svg class="ic b" style="left:1707px;top:737px;width:14px;height:14px"><use href="#i-wrench"/></svg><svg class="ic b" style="left:1727px;top:738px;width:14px;height:12px"><use href="#i-cols"/></svg><svg class="ic b" style="left:1749px;top:737.8px;width:14px;height:12px"><use href="#i-area"/></svg><svg class="ic b" style="left:1768.5px;top:736px;width:17px;height:15px"><use href="#i-bars"/></svg><svg class="ic chk" style="left:1791.6px;top:737.2px;width:13px;height:13px"><use href="#i-done"/></svg><svg class="ic r" style="left:1824px;top:736.6px;width:12.3px;height:14.2px"><use href="#i-trash"/></svg>
<span class="tx" style="left:41px;top:775px"><i style="width:36.93px;letter-spacing:0.126px">F34-2</i><i style="width:28.01px;letter-spacing:0.009px">4.12</i><i style="width:42.89px;letter-spacing:0.287px">Layout</i><i style="width:15.11px;letter-spacing:-0.435px">R2</i></span>
<span class="tx" style="left:545px;top:775px"><i style="width:20.81px;letter-spacing:-0.243px">F34</i></span>
<span class="badge ok" style="left:665px;top:772px">Complete</span>
<span class="tx nr" style="right:1016.4px;top:775px">883</span>
<span class="tx nr" style="right:895.8px;top:775px"><svg class="tg" style="margin-right:11px;top:-1px"><use href="#i-target"/></svg>873</span>
<span class="tx" style="left:1026px;top:775px"><i style="width:24.30px;letter-spacing:0.405px">Oct</i><i style="width:20.84px;letter-spacing:-0.057px">19,</i><i style="width:35.17px;letter-spacing:0.050px">2023,</i><i style="width:45.21px;letter-spacing:-0.019px">4:58:49</i><i style="width:19.36px;letter-spacing:0.307px">PM</i></span>
<span class="tx" style="left:1246px;top:775px"><i style="width:25.13px;letter-spacing:0.519px">911</i><i style="width:33.82px;letter-spacing:0.509px">/1694</i></span>
<span class="cb" style="left:1366px;top:773px"></span>
<span class="cb" style="left:1457px;top:773px"></span>
<svg class="ic play" style="left:1648px;top:773.5px;width:13px;height:15px"><use href="#i-play"/></svg><svg class="ic gear" style="left:1667px;top:774px;width:14px;height:14px"><use href="#i-gear"/></svg><svg class="ic b" style="left:1688px;top:774px;width:13px;height:14px"><use href="#i-copy"/></svg><svg class="ic b" style="left:1707px;top:774px;width:14px;height:14px"><use href="#i-wrench"/></svg><svg class="ic b" style="left:1727px;top:775px;width:14px;height:12px"><use href="#i-cols"/></svg><svg class="ic b" style="left:1749px;top:774.8px;width:14px;height:12px"><use href="#i-area"/></svg><svg class="ic b" style="left:1768.5px;top:773px;width:17px;height:15px"><use href="#i-bars"/></svg><svg class="ic chk" style="left:1791.6px;top:774.2px;width:13px;height:13px"><use href="#i-done"/></svg><svg class="ic r" style="left:1824px;top:773.6px;width:12.3px;height:14.2px"><use href="#i-trash"/></svg>
<span class="tx" style="left:41px;top:812px"><i style="width:33.88px;letter-spacing:0.266px">Copy</i><i style="width:15.58px;letter-spacing:0.759px">of</i><i style="width:24.45px;letter-spacing:-0.243px">F34</i><i style="width:38.32px;letter-spacing:0.853px">Mod1</i><i style="width:15.11px;letter-spacing:-0.435px">R3</i></span>
<span class="tx" style="left:545px;top:812px"><i style="width:20.81px;letter-spacing:-0.243px">F34</i></span>
<span class="badge ok" style="left:665px;top:809px">Complete</span>
<span class="tx nr" style="right:1016.4px;top:813px"><svg class="tg" style="margin-right:7px;top:-2px"><use href="#i-target"/></svg>1073</span>
<span class="tx nr" style="right:895.8px;top:812px">311</span>
<span class="tx" style="left:1026px;top:812px"><i style="width:27.55px;letter-spacing:0.555px">Aug</i><i style="width:13.68px;letter-spacing:-0.191px">1,</i><i style="width:35.17px;letter-spacing:0.050px">2023,</i><i style="width:45.21px;letter-spacing:-0.019px">3:18:49</i><i style="width:19.36px;letter-spacing:0.307px">PM</i></span>
<span class="tx" style="left:1246px;top:812px"><i style="width:32.29px;letter-spacing:0.210px">1263</i><i style="width:33.82px;letter-spacing:0.509px">/3027</i></span>
<span class="cb" style="left:1366px;top:810px"></span>
<span class="cb" style="left:1457px;top:810px"></span>
<svg class="ic play" style="left:1648px;top:810.5px;width:13px;height:15px"><use href="#i-play"/></svg><svg class="ic gear" style="left:1667px;top:811px;width:14px;height:14px"><use href="#i-gear"/></svg><svg class="ic b" style="left:1688px;top:811px;width:13px;height:14px"><use href="#i-copy"/></svg><svg class="ic b" style="left:1707px;top:811px;width:14px;height:14px"><use href="#i-wrench"/></svg><svg class="ic b" style="left:1727px;top:812px;width:14px;height:12px"><use href="#i-cols"/></svg><svg class="ic b" style="left:1749px;top:811.8px;width:14px;height:12px"><use href="#i-area"/></svg><svg class="ic b" style="left:1768.5px;top:810px;width:17px;height:15px"><use href="#i-bars"/></svg><svg class="ic chk" style="left:1791.6px;top:811.2px;width:13px;height:13px"><use href="#i-done"/></svg><svg class="ic r" style="left:1824px;top:810.6px;width:12.3px;height:14.2px"><use href="#i-trash"/></svg>
<span class="tx" style="left:41px;top:849px"><i style="width:33.88px;letter-spacing:0.266px">Copy</i><i style="width:15.58px;letter-spacing:0.759px">of</i><i style="width:36.93px;letter-spacing:0.126px">F34-2</i><i style="width:28.01px;letter-spacing:0.009px">4.10</i><i style="width:42.89px;letter-spacing:0.287px">Layout</i><i style="width:53.60px;letter-spacing:0.774px">with-out</i><i style="width:68.01px;letter-spacing:0.328px">restrictions</i><i style="width:15.11px;letter-spacing:-0.435px">R3</i></span>
<span class="tx" style="left:545px;top:849px"><i style="width:20.81px;letter-spacing:-0.243px">F34</i></span>
<span class="badge ok" style="left:665px;top:846px">Complete</span>
<span class="tx nr" style="right:1016.4px;top:850px"><svg class="tg" style="margin-right:7px;top:-1px"><use href="#i-target"/></svg>858</span>
<span class="tx nr" style="right:895.8px;top:850px"><svg class="tg" style="margin-right:11px;top:-1px"><use href="#i-target"/></svg>789</span>
<span class="tx" style="left:1026px;top:849px"><i style="width:19.12px;letter-spacing:-0.167px">Jul</i><i style="width:20.84px;letter-spacing:-0.057px">24,</i><i style="width:35.17px;letter-spacing:0.050px">2023,</i><i style="width:45.21px;letter-spacing:-0.019px">1:46:49</i><i style="width:19.36px;letter-spacing:0.307px">PM</i></span>
<span class="tx" style="left:1246px;top:849px"><i style="width:25.13px;letter-spacing:0.210px">686</i><i style="width:33.82px;letter-spacing:0.509px">/1719</i></span>
<span class="cb" style="left:1366px;top:847px"></span>
<span class="cb" style="left:1457px;top:847px"></span>
<svg class="ic play" style="left:1648px;top:848.5px;width:13px;height:15px"><use href="#i-play"/></svg><svg class="ic gear" style="left:1667px;top:849px;width:14px;height:14px"><use href="#i-gear"/></svg><svg class="ic b" style="left:1688px;top:849px;width:13px;height:14px"><use href="#i-copy"/></svg><svg class="ic b" style="left:1707px;top:849px;width:14px;height:14px"><use href="#i-wrench"/></svg><svg class="ic b" style="left:1727px;top:850px;width:14px;height:12px"><use href="#i-cols"/></svg><svg class="ic b" style="left:1749px;top:849.8px;width:14px;height:12px"><use href="#i-area"/></svg><svg class="ic b" style="left:1768.5px;top:848px;width:17px;height:15px"><use href="#i-bars"/></svg><svg class="ic chk" style="left:1791.6px;top:849.2px;width:13px;height:13px"><use href="#i-done"/></svg><svg class="ic r" style="left:1824px;top:848.6px;width:12.3px;height:14.2px"><use href="#i-trash"/></svg>
<span class="tx" style="left:41px;top:887px"><i style="width:33.88px;letter-spacing:0.266px">Copy</i><i style="width:15.58px;letter-spacing:0.759px">of</i><i style="width:24.45px;letter-spacing:-0.243px">F34</i><i style="width:38.32px;letter-spacing:0.853px">Mod1</i><i style="width:15.11px;letter-spacing:-0.435px">R1</i></span>
<span class="tx" style="left:545px;top:887px"><i style="width:20.81px;letter-spacing:-0.243px">F34</i></span>
<span class="badge ok" style="left:665px;top:884px">Complete</span>
<span class="tx nr" style="right:1016.4px;top:887px">97</span>
<span class="tx nr" style="right:895.8px;top:887px">311</span>
<span class="tx" style="left:1026px;top:887px"><i style="width:27.55px;letter-spacing:0.555px">Aug</i><i style="width:20.84px;letter-spacing:-0.057px">16,</i><i style="width:35.17px;letter-spacing:0.050px">2023,</i><i style="width:45.21px;letter-spacing:-0.019px">1:04:49</i><i style="width:19.36px;letter-spacing:0.307px">PM</i></span>
<span class="tx" style="left:1246px;top:887px"><i style="width:17.96px;letter-spacing:0.210px">38</i><i style="width:19.50px;letter-spacing:0.708px">/95</i></span>
<span class="cb" style="left:1366px;top:885px"></span>
<span class="cb" style="left:1457px;top:885px"></span>
<svg class="ic play" style="left:1648px;top:885.5px;width:13px;height:15px"><use href="#i-play"/></svg><svg class="ic gear" style="left:1667px;top:886px;width:14px;height:14px"><use href="#i-gear"/></svg><svg class="ic b" style="left:1688px;top:886px;width:13px;height:14px"><use href="#i-copy"/></svg><svg class="ic b" style="left:1707px;top:886px;width:14px;height:14px"><use href="#i-wrench"/></svg><svg class="ic b" style="left:1727px;top:887px;width:14px;height:12px"><use href="#i-cols"/></svg><svg class="ic b" style="left:1749px;top:886.8px;width:14px;height:12px"><use href="#i-area"/></svg><svg class="ic b" style="left:1768.5px;top:885px;width:17px;height:15px"><use href="#i-bars"/></svg><svg class="ic chk" style="left:1791.6px;top:886.2px;width:13px;height:13px"><use href="#i-done"/></svg><svg class="ic r" style="left:1824px;top:885.6px;width:12.3px;height:14.2px"><use href="#i-trash"/></svg>
<span class="tx" style="left:41px;top:924px"><i style="width:36.93px;letter-spacing:0.126px">F34-2</i><i style="width:28.01px;letter-spacing:0.009px">4.10</i><i style="width:42.89px;letter-spacing:0.287px">Layout</i><i style="width:53.60px;letter-spacing:0.774px">with-out</i><i style="width:68.01px;letter-spacing:0.328px">restrictions</i><i style="width:18.75px;letter-spacing:-0.435px">R3</i><i style="width:8.95px;letter-spacing:1.150px">-</i><i style="width:65.71px;letter-spacing:-0.469px">APPROVED</i></span>
<span class="tx" style="left:545px;top:924px"><i style="width:20.81px;letter-spacing:-0.243px">F34</i></span>
<span class="badge ok" style="left:665px;top:921px">Complete</span>
<span class="tx nr" style="right:1016.4px;top:924px"><svg class="tg" style="margin-right:7px;top:-1px"><use href="#i-target"/></svg>858</span>
<span class="tx nr" style="right:895.8px;top:924px"><svg class="tg" style="margin-right:11px;top:-1px"><use href="#i-target"/></svg>789</span>
<span class="tx" style="left:1026px;top:924px"><i style="width:23.43px;letter-spacing:-0.123px">Jun</i><i style="width:20.84px;letter-spacing:-0.057px">15,</i><i style="width:35.17px;letter-spacing:0.050px">2023,</i><i style="width:45.21px;letter-spacing:-0.019px">6:51:48</i><i style="width:19.36px;letter-spacing:0.307px">PM</i></span>
<span class="tx" style="left:1246px;top:924px"><i style="width:25.13px;letter-spacing:0.210px">838</i><i style="width:33.82px;letter-spacing:0.509px">/1719</i></span>
<span class="cb" style="left:1366px;top:922px"></span>
<span class="cb" style="left:1457px;top:922px"></span>
<svg class="ic play" style="left:1648px;top:922.5px;width:13px;height:15px"><use href="#i-play"/></svg><svg class="ic gear" style="left:1667px;top:923px;width:14px;height:14px"><use href="#i-gear"/></svg><svg class="ic b" style="left:1688px;top:923px;width:13px;height:14px"><use href="#i-copy"/></svg><svg class="ic b" style="left:1707px;top:923px;width:14px;height:14px"><use href="#i-wrench"/></svg><svg class="ic b" style="left:1727px;top:924px;width:14px;height:12px"><use href="#i-cols"/></svg><svg class="ic b" style="left:1749px;top:923.8px;width:14px;height:12px"><use href="#i-area"/></svg><svg class="ic b" style="left:1768.5px;top:922px;width:17px;height:15px"><use href="#i-bars"/></svg><svg class="ic chk" style="left:1791.6px;top:923.2px;width:13px;height:13px"><use href="#i-done"/></svg><svg class="ic r" style="left:1824px;top:922.6px;width:12.3px;height:14.2px"><use href="#i-trash"/></svg>
<span class="tx" style="left:41px;top:961px"><i style="width:36.93px;letter-spacing:0.126px">F34-1</i><i style="width:28.01px;letter-spacing:0.009px">4.10</i><i style="width:42.89px;letter-spacing:0.287px">Layout</i><i style="width:15.11px;letter-spacing:-0.435px">R2</i></span>
<span class="tx" style="left:545px;top:961px"><i style="width:20.81px;letter-spacing:-0.243px">F34</i></span>
<span class="badge ok" style="left:665px;top:958px">Complete</span>
<span class="tx nr" style="right:1016.4px;top:962px"><svg class="tg" style="margin-right:7px;top:-2px"><use href="#i-target"/></svg>858</span>
<span class="tx nr" style="right:895.8px;top:962px"><svg class="tg" style="margin-right:11px;top:-2px"><use href="#i-target"/></svg>789</span>
<span class="tx" style="left:1026px;top:961px"><i style="width:23.43px;letter-spacing:-0.123px">Jun</i><i style="width:20.84px;letter-spacing:-0.057px">14,</i><i style="width:35.17px;letter-spacing:0.050px">2023,</i><i style="width:45.21px;letter-spacing:-0.019px">6:51:48</i><i style="width:19.36px;letter-spacing:0.307px">PM</i></span>
<span class="tx" style="left:1246px;top:961px"><i style="width:25.13px;letter-spacing:0.210px">838</i><i style="width:33.82px;letter-spacing:0.509px">/1719</i></span>
<span class="cb" style="left:1366px;top:959px"></span>
<span class="cb" style="left:1457px;top:959px"></span>
<svg class="ic play" style="left:1648px;top:959.5px;width:13px;height:15px"><use href="#i-play"/></svg><svg class="ic gear" style="left:1667px;top:960px;width:14px;height:14px"><use href="#i-gear"/></svg><svg class="ic b" style="left:1688px;top:960px;width:13px;height:14px"><use href="#i-copy"/></svg><svg class="ic b" style="left:1707px;top:960px;width:14px;height:14px"><use href="#i-wrench"/></svg><svg class="ic b" style="left:1727px;top:961px;width:14px;height:12px"><use href="#i-cols"/></svg><svg class="ic b" style="left:1749px;top:960.8px;width:14px;height:12px"><use href="#i-area"/></svg><svg class="ic b" style="left:1768.5px;top:959px;width:17px;height:15px"><use href="#i-bars"/></svg><svg class="ic chk" style="left:1791.6px;top:960.2px;width:13px;height:13px"><use href="#i-done"/></svg><svg class="ic r" style="left:1824px;top:959.6px;width:12.3px;height:14.2px"><use href="#i-trash"/></svg>
<div style="position:absolute;left:1628px;top:953px;width:1px;height:3px;background:#f9f9f9"></div><div style="position:absolute;left:1608px;top:953px;width:1px;height:3px;background:#c8c8c8"></div>
</div>
<div id="sb"><svg style="position:absolute;left:2.9px;top:7.6px;width:9.4px;height:7.4px" viewBox="0 0 9.4 7.4"><path d="M4.7 1 L8.4 6.4 H1 Z" fill="#8b8b8b" stroke="#8b8b8b" stroke-width="1.6" stroke-linejoin="round"/></svg><div class="th"></div><svg style="position:absolute;left:2.9px;top:940.8px;width:9.4px;height:7.4px" viewBox="0 0 9.4 7.4"><path d="M4.7 6.4 L8.4 1 H1 Z" fill="#8b8b8b" stroke="#8b8b8b" stroke-width="1.6" stroke-linejoin="round"/></svg></div>
<div style="position:absolute;left:0;top:0;width:7px;height:7px;background:radial-gradient(circle at 7px 7px, rgba(0,0,0,0) 6.3px, #f3ece4 7px)"></div>
<div style="position:absolute;left:0;top:949px;width:7px;height:7px;background:radial-gradient(circle at 7px 0px, rgba(0,0,0,0) 5.6px, #e6e6e6 6.4px, #f4f4f4 7.2px, #fff 8px)"></div>
<div style="position:absolute;left:1905px;top:949px;width:7px;height:7px;background:radial-gradient(circle at 0px 0px, rgba(0,0,0,0) 5.4px, #e2e2e2 6.4px, #f2f2f2 7.4px)"></div>
<div style="position:absolute;left:1905px;top:0;width:7px;height:7px;background:radial-gradient(circle at 0px 7px, rgba(0,0,0,0) 5.4px, #ececec 6.4px, #f6f6f6 7.4px)"></div>
</body></html>
